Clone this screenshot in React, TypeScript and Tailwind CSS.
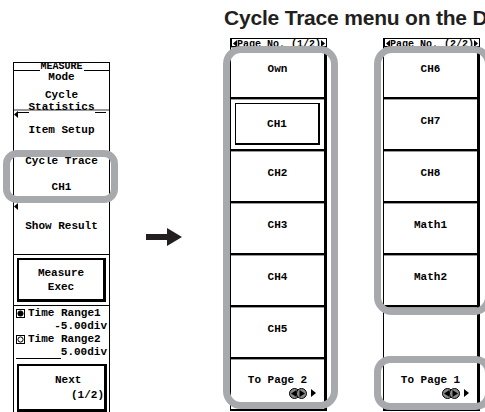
import React from 'react';

// small left-pointing marker used on the soft-key panel
const Marker = () => (
  <svg width="4" height="7" viewBox="0 0 4 7" className="block">
    <path d="M4 0 L0 3.5 L4 7 Z" fill="#000" />
  </svg>
);

// jog dial icon shown under "To Page"
const Dial = () => (
  <span className="flex items-center gap-[4px]">
    <svg width="18" height="11" viewBox="0 0 18 11">
      <circle cx="5.5" cy="5.5" r="5" fill="#8a8a8a" stroke="#000" />
      <circle cx="12.5" cy="5.5" r="5" fill="#8a8a8a" stroke="#000" />
      <path d="M2 5.5 L7.5 2 L7.5 9 Z" fill="#000" />
      <path d="M16 5.5 L10.5 2 L10.5 9 Z" fill="#000" />
    </svg>
    <svg width="5" height="8" viewBox="0 0 5 8">
      <path d="M0 0 L5 4 L0 8 Z" fill="#000" />
    </svg>
  </span>
);

// time range radio-like icon
const RangeIcon = ({ filled }: { filled?: boolean }) => (
  <svg width="9" height="9" viewBox="0 0 9 9" className="block">
    <rect x="0.5" y="0.5" width="8" height="8" fill="#fff" stroke="#000" />
    <circle cx="4.5" cy="4.5" r="2.6" fill={filled ? '#000' : '#fff'} stroke="#000" />
  </svg>
);

const PageHeader = ({ label }: { label: string }) => (
  <div className="flex h-[9px] items-start overflow-hidden border border-black bg-white px-[1px]">
    <svg width="4" height="7" viewBox="0 0 4 7" className="mt-[1px] block shrink-0">
      <path d="M4 0 L0 3.5 L4 7 Z" fill="#000" />
    </svg>
    <span className="flex-1 text-center text-[10px] leading-[12px]">{label}</span>
    <svg width="4" height="7" viewBox="0 0 4 7" className="mt-[1px] block shrink-0">
      <path d="M0 0 L4 3.5 L0 7 Z" fill="#000" />
    </svg>
  </div>
);

// one soft key of the page menus
const Key = ({ label, selected, page }: { label?: string; selected?: boolean; page?: boolean }) => (
  <div className="flex h-[52px] flex-col border-b-2 border-r-[3px] border-black shadow-[inset_0_1px_0_#9a9a9a]">
    {selected ? (
      <div className="m-[4px] flex flex-1 items-center justify-center border border-b-2 border-r-2 border-black">
        {label}
      </div>
    ) : page ? (
      <div className="flex flex-1 flex-col items-center justify-center pt-[4px]">
        <span>{label}</span>
        <span className="mt-[2px] self-end pr-[8px]">
          <Dial />
        </span>
      </div>
    ) : (
      <div className="flex flex-1 items-center justify-center pb-[6px]">{label}</div>
    )}
  </div>
);

const LeftPanel = () => (
  <div className="mt-[24px] w-[97px] border-x border-black">
    {/* title bar */}
    <div className="flex h-[9px] items-end border-t border-black">
      <div className="flex-1 border-b border-black" />
      <span className="px-[1px] text-[10px] leading-[8px]">MEASURE</span>
      <div className="flex-1 border-b border-black" />
    </div>

    {/* Mode */}
    <div className="flex h-[40px] flex-col items-center border-b-2 border-[#9a9a9a]">
      <span>Mode</span>
      <span className="mt-[6px]">Cycle</span>
      <div className="flex w-full items-end">
        <div className="ml-[3px] flex-1 border-b border-black" />
        <span>Statistics</span>
        <div className="mr-[3px] flex-1 border-b border-black" />
      </div>
    </div>

    {/* Item Setup */}
    <div className="flex h-[40px] flex-col">
      <Marker />
      <div className="flex flex-1 items-center justify-center pb-[10px]">Item Setup</div>
    </div>

    {/* Cycle Trace */}
    <div className="flex h-[52px] flex-col items-center pt-[4px]">
      <span>Cycle Trace</span>
      <span className="mt-[14px]">CH1</span>
    </div>

    {/* Show Result */}
    <div className="flex h-[52px] flex-col border-b border-black">
      <Marker />
      <div className="flex flex-1 items-center justify-center pb-[12px]">Show Result</div>
    </div>

    {/* Measure Exec */}
    <div className="flex h-[50px] p-[3px] pt-[3px]">
      <div className="flex flex-1 flex-col items-center justify-center border-2 border-b-[3px] border-r-[3px] border-black leading-[14px]">
        <span>Measure</span>
        <span>Exec</span>
      </div>
    </div>

    {/* Time Range */}
    <div className="flex h-[56px] flex-col border-t border-black pt-[1px] leading-[13px]">
      <div className="flex items-center gap-[3px] pl-[2px]">
        <RangeIcon filled />
        <span>Time Range1</span>
      </div>
      <div className="pr-[2px] text-right">-5.00div</div>
      <div className="flex items-center gap-[3px] pl-[2px]">
        <RangeIcon />
        <span>Time Range2</span>
      </div>
      <div className="flex items-end">
        <div className="ml-[2px] flex-1 border-b border-black" />
        <span className="pr-[2px]">5.00div</span>
      </div>
    </div>

    {/* Next */}
    <div className="flex h-[54px] p-[3px] pt-[3px]">
      <div className="flex flex-1 flex-col justify-center border-2 border-b-[3px] border-r-[3px] border-black leading-[15px]">
        <span className="pl-[36px]">Next</span>
        <span className="pl-[52px]">(1/2)</span>
      </div>
    </div>
  </div>
);

const pageOne = ['Own', 'CH1', 'CH2', 'CH3', 'CH4', 'CH5'];
const pageTwo = ['CH6', 'CH7', 'CH8', 'Math1', 'Math2', ''];

export default function App() {
  return (
    <div className="relative h-[412px] w-[485px] overflow-hidden bg-white font-['Liberation_Mono',monospace] text-[11px] font-bold leading-[12px] text-black">
      <div className="h-[38px] pl-[224px] pt-[7px]">
        <h1 className="whitespace-nowrap font-['Liberation_Sans',Arial,sans-serif] text-[21px] font-bold leading-[21px] tracking-[-0.2px] text-[#231f20]">
          Cycle Trace menu on the Display
        </h1>
      </div>

      <div className="flex items-start pl-[13px]">
        <LeftPanel />

        {/* arrow */}
        <div className="w-[120px] pl-[36px] pt-[190px]">
          <svg width="36" height="18" viewBox="0 0 36 18" className="block">
            <path d="M0 6 L21 6 L21 0 L36 9 L21 18 L21 12 L0 12 Z" fill="#231f20" />
          </svg>
        </div>

        <div className="w-[97px] border-l border-black">
          <PageHeader label="Page No. (1/2)" />
          {pageOne.map((l) => (
            <Key key={l} label={l} selected={l === 'CH1'} />
          ))}
          <Key label="To Page 2" page />
        </div>

        <div className="w-[56px]" />

        <div className="w-[97px] border-l border-black">
          <PageHeader label="Page No. (2/2)" />
          {pageTwo.map((l, i) => (
            <Key key={i} label={l} />
          ))}
          <Key label="To Page 1" page />
        </div>
      </div>

      {/* gray callout frames */}
      <div className="absolute left-[3px] top-[150px] h-[53px] w-[115px] rounded-[14px] border-[7px] border-[#a7a9ac]" />
      <div className="absolute left-[223px] top-[46px] h-[363px] w-[115px] rounded-[18px] border-[7px] border-[#a7a9ac]" />
      <div className="absolute left-[374px] top-[46px] h-[269px] w-[118px] rounded-[18px] border-[7px] border-[#a7a9ac]" />
      <div className="absolute left-[374px] top-[356px] h-[54px] w-[118px] rounded-[16px] border-[7px] border-[#a7a9ac]" />
    </div>
  );
}
